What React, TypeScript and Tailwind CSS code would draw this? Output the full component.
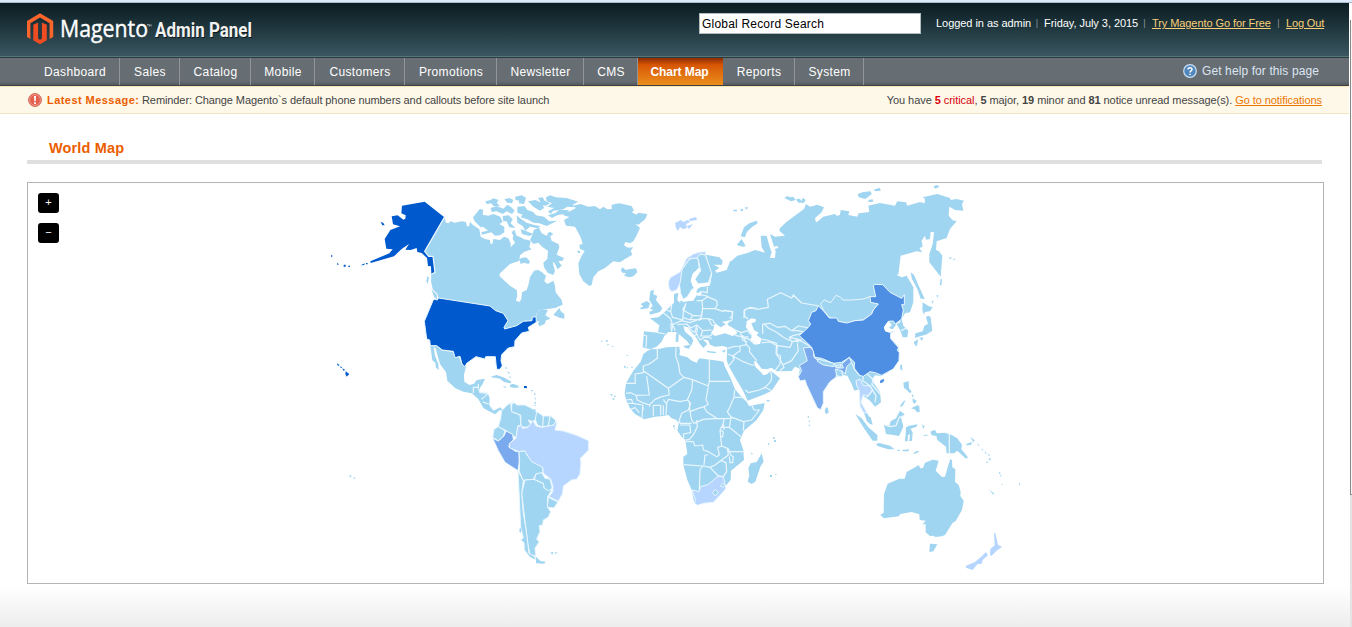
import type { ReactNode } from "react";

const LAND = "#a0d5f1";
const LINE = "#eaf7fe";

/* Map sheets are drawn at three units per pixel, each with its own origin. */
function Sheet({ x, y, children }: { x: number; y: number; children: ReactNode }) {
  return <g transform={`translate(${x} ${y}) scale(0.33333)`}>{children}</g>;
}

function Land({ d, fill = LAND, edge = false }: { d: string; fill?: string; edge?: boolean }) {
  return <path d={d} fill={fill} stroke={edge ? LINE : "none"} strokeWidth={3} strokeLinejoin="round" />;
}

function Border({ d }: { d: string }) {
  return <path d={d} fill="none" stroke={LINE} strokeWidth={3.6} strokeLinejoin="round" />;
}

function NorthAmerica() {
  return (
    <Sheet x={320} y={184}>
      <Land d="M373 100L378 116 385 118 392 112 404 116 425 112 438 114 441 127 447 127 450 113 458 122 478 136 482 158 495 165 510 168 512 181 518 178 520 165 540 168 552 158 565 163 572 178 572 190 585 176 578 165 580 155 575 145 583 137 590 155 602 160 612 166 625 168 632 172 628 190 635 196 612 204 600 214 598 230 570 240 540 268 538 275 555 292 570 305 590 318 592 335 588 350 598 354 604 345 606 325 620 318 626 300 630 280 642 260 655 258 665 264 678 275 673 292 682 300 700 290 705 305 707 325 725 348 728 362 705 372 682 375 660 378 650 388 648 398 637 400 636 410 610 412 590 425 554 435 552 430 564 410 550 388 527 380 510 366 420 352 355 342 352 330 338 315 333 292 334 270 345 266 339 217 326 217 314 202Z" />
      <Land d="M598 225L605 222 618 220 630 232 626 240 612 236 602 240Z" />
      <Land d="M652 385L664 376 684 378 676 394 692 404 678 409 674 420 658 427 654 419 658 410 648 415 648 398ZM700 392L718 372 724 384 733 390 733 404 718 401ZM334 315L350 332 352 348 342 338ZM322 277L327 280 323 301 319 292Z" />
      <Land d="M636 155L642 137 657 131 665 148 680 155 688 148 695 170 715 180 718 190 710 212 732 222 728 230 715 232 725 245 713 256 703 236 698 235 705 262 700 273 683 266 672 250 670 236 682 225 684 200 668 190 655 176 640 180 630 168Z" />
      <Land d="M459 100L480 74 490 78 488 92 505 95 520 90 541 98 548 114 538 120 553 128 553 145 540 154 525 155 514 145 486 152 484 144 504 140 489 128 482 130 464 112ZM496 52L512 48 520 43 536 48 530 56 540 66 520 66 514 58 500 60ZM512 72L530 66 550 74 562 62 574 70 584 80 576 90 560 82 548 90 530 82 515 84ZM553 46L568 42 580 48 576 58 562 56ZM586 38L606 34 618 42 612 60 596 58 598 50 586 48ZM592 68L614 66 622 78 640 84 648 94 672 98 688 112 712 110 680 126 658 118 640 116 622 106 602 100 608 92 592 86ZM624 52L646 48 668 58 672 72 660 80 640 68ZM654 42L668 40 674 50 690 58 676 66 664 58ZM548 96L566 94 578 106 572 118 586 132 568 130 560 112 550 112ZM590 94L602 104 620 116 640 122 662 127 652 133 630 128 616 140 608 126 592 116ZM602 135L620 142 640 150 628 156 606 150ZM690 143L700 150 692 156 680 150Z" />
      <Land d="M678 40L690 34 708 40 740 42 775 53 758 62 762 70 742 68 730 76 714 79 700 80 692 90 684 82 702 72 682 68 696 58 680 52ZM684 94L704 88 718 78 748 78 732 90 712 94 696 102Z" />
      <Land d="M750 82L768 72 758 65 782 60 805 68 825 66 840 76 850 68 862 76 875 75 875 62 898 58 935 66 942 80 935 85 950 92 954 86 982 90 976 105 955 122 946 120 960 132 948 158 940 172 930 178 916 174 912 184 924 191 940 190 932 200 937 212 915 225 900 235 880 232 855 252 835 262 820 280 815 303 808 306 790 292 778 270 775 238 785 215 794 201 780 194 778 182 788 180 782 160 765 128 738 125 732 108 748 99 730 94 733 84Z" />
      <Land d="M902 258L908 250 917 258 930 255 948 253 952 265 940 277 928 280 912 275 918 268 907 266ZM772 200L780 201 780 207 774 207Z" />
      <Land d="M331 486L350 487 367 500 399 503 404 520 417 518 426 542 438 548 432 572 433 593 448 603 462 599 470 588 495 584 488 600 480 611 478 625 503 627 509 643 508 663 520 680 542 670 548 681 540 678 525 691 510 683 490 672 475 645 455 628 430 623 405 612 382 590 378 565 360 540 347 494 341 488 345 515 355 540 356 558 348 551 346 536 337 529Z" />
      <Land d="M512 578L530 573 550 580 574 593 572 598 552 594 540 584 515 580ZM570 603L578 599 592 604 598 610 584 612 570 609ZM548 607L560 608 556 612ZM555 548L562 552 558 556ZM562 560L570 568 566 570ZM568 575L574 580 570 583ZM634 618h5v4h-5zM642 628h4v5h-4zM644 642h4v4h-4zM643 656h4v4h-4z" />
      <Land d="M843 470h5v3h-5zM858 468h5v5h-5zM862 480h4v4h-4zM876 486h4v3h-4zM920 513h4v3h-4zM912 546h5v5h-5zM920 550h4v3h-4zM934 548h4v4h-4z" />
      <Border d="M460 628V610H475V600M475 612L480 626 505 628 484 646M488 654L506 660M512 668L520 676" />
      <Land fill="#005ace" d="M246 65L314 53 373 100 314 202 326 217 339 217 345 266 334 270 333 247 324 246 321 222 305 207 292 204 290 192 272 198 256 197 267 180 244 196 222 217 152 237 151 232 208 208 218 196 207 195 199 194 194 165 211 138 240 127 219 121 215 97 233 94 250 107 256 104 257 94 244 88ZM182 113L190 117 194 124 187 124ZM33 214h4v4h-4zM51 236L57 241 52 243ZM71 242h6v6h-6zM85 245h5v4h-5zM122 244L134 238 133 243ZM138 237h5v4h-5zM50 538L59 543 54 546ZM61 546L67 551 62 552ZM67 553L76 558 70 560ZM77 562L88 570 80 578 76 570ZM612 606L620 606 621 613 612 612Z" />
      <Border d="M373 100L314 202 326 217 339 217 345 266 334 270" />
      <Land fill="#005ace" edge d="M341 345L352 348 355 342 420 352 510 366 527 380 550 388 564 410 552 430 554 435 590 425 610 412 636 410 637 400 648 398 649 415 625 430 628 442 605 447 585 470 584 488 565 492 545 512 543 530 547 545 540 556 530 556 528 540 526 518 497 518 495 525 483 522 468 518 440 538 435 548 426 540 420 517 405 521 400 502 367 498 350 485 331 485 329 468 320 465 313 412Z" />
    </Sheet>
  );
}

function SouthAmerica() {
  return (
    <Sheet x={480} y={380}>
      <Land edge d="M103 62L92 70 95 95 120 105 123 135 113 138 110 175 98 165 75 150 55 140 62 115 65 92 82 75Z" />
      <Land edge d="M95 72L105 68 110 75 135 75 165 90 172 100 165 120 158 125 145 120 153 134 140 142 123 140 122 105 95 95Z" />
      <Land edge d="M170 95L190 108 212 108 228 122 225 135 205 138 185 140 172 135 166 118Z" />
      <Border d="M190 108L188 138M210 108L205 138" />
      <Land edge d="M42 148L55 140 75 152 70 170 55 182 38 172Z" />
      <Land edge fill="#7aa9ed" d="M38 175L55 183 72 168 78 153 98 163 100 178 86 200 108 215 117 212 118 245 114 272 75 247 55 212Z" />
      <Land edge d="M117 215L137 212 140 225 185 255 190 278 168 282 160 298 135 300 130 302 118 275 118 240Z" />
      <Land edge d="M135 300L162 298 192 312 192 325 215 330 203 350 203 382 212 395 205 412 190 420 188 435 178 437 180 455 170 478 178 485 165 505 168 528 150 524 143 490 137 440 130 380 125 340Z" />
      <Land edge d="M168 282L185 278 195 295 210 297 217 325 205 332 193 325 190 310 163 298Z" />
      <Land edge d="M205 352L234 366 222 384 202 382Z" />
      <Land edge d="M114 272L130 303 125 340 130 400 140 460 147 520 165 530 168 540 150 532 133 510 132 488 122 480 130 474 122 440Z" />
      <Land edge fill="#b6d5ff" d="M113 140L123 136 128 145 142 143 160 122 168 138 185 142 205 138 222 135 228 120 230 132 225 150 250 153 290 166 326 182 326 210 301 235 303 250 300 282 290 298 275 300 250 318 248 340 235 364 207 350 218 335 219 320 212 297 190 280 188 262 155 245 137 218 134 212 117 215 88 203 88 190 108 175Z" />
      <Land d="M168 530L180 542 197 546 192 551 168 550ZM211 518L220 515 217 524ZM223 518L233 516 226 523ZM119 445L124 445 123 458 118 455ZM163 75h4v3h-4zM164 65h4v3h-4zM162 88h5v4h-5z" />
    </Sheet>
  );
}

function Asia() {
  return (
    <Sheet x={730} y={184}>
      <Land d="M-1 233L5 230 22 215 50 208 75 198 90 202 105 206 95 190 92 155 110 155 118 185 125 205 120 222 135 222 137 200 134 195 145 192 143 186 132 188 120 150 135 158 165 155 148 140 150 132 170 113 222 75 228 60 240 68 262 62 282 70 275 85 255 103 258 115 264 112 280 98 315 90 322 96 330 92 332 78 358 82 355 93 382 98 386 88 418 84 415 65 450 57 495 65 502 52 528 55 532 65 570 54 584 58 585 45 578 40 622 30 660 42 662 48 680 45 702 50 696 60 700 80 675 78 658 68 656 95 668 109 680 112 660 135 650 162 620 172 618 198 627 202 637 215 632 278 598 235 598 210 608 180 612 145 602 143 600 165 588 167 585 155 575 170 578 188 568 192 577 205 560 202 512 215 505 272 498 272 515 280 530 275 550 310 550 355 540 385 525 388 515 405 520 425 535 440 532 460 518 460 513 445 500 420 482 445 482 462 505 490 508 520 490 555 455 576 435 574 425 588 450 625 453 655 435 668 420 650 400 635 390 655 412 688 425 715 412 713 402 688 390 665 387 618 380 618 373 620 365 600 352 575 340 573 318 578 300 593 280 623 280 658 272 676 262 672 230 603 225 588 210 591 205 578 210 555 160 530 145 500 85 500 40 475 -1 470Z" />
      <Border d="M-20 378L8 384 5 400 -2 402M55 405L45 398 43 378 62 370 82 376 115 370 112 346 152 326 185 342 190 333 215 357 268 366M98 450L98 420 120 418 142 430 165 427 185 440 205 426 238 432M95 478L98 476 120 474 142 485M185 440L205 440 225 445 202 452 188 455 178 460 215 468M102 420L115 432 140 445 160 460 180 470M142 485L140 510 152 516 150 540 135 560M142 485L180 490 188 472 212 470 245 490M202 478L205 500 185 530 160 542M178 460L186 475M195 462L205 475" />
      <Land edge d="M272 360L282 348 302 356 318 334 332 340 338 348 365 348 400 345 422 337 425 350 445 360 430 378 425 390 400 408 375 410 350 418 325 412 298 400 280 378Z" />
      <Land edge fill="#4f8fe3" d="M265 366L280 380 298 402 320 402 325 412 350 417 375 410 400 408 425 390 430 378 445 360 422 355 420 338 437 338 430 305 435 301 458 302 480 325 515 343 523 332 523 362 515 362 520 378 515 405 496 420 490 411 475 412 463 430 468 442 495 440 482 448 482 464 505 490 502 500 508 505 507 530 490 555 455 574 435 566 420 563 400 577 388 574 372 555 374 535 358 520 335 535 310 538 275 523 255 520 245 490 230 475 208 455 235 430 242 420 235 410 245 385 258 380Z" />
      <Land fill="#ffffff" d="M462 430L475 412 486 422 477 432 495 438 480 447 465 441Z" />
      <Land fill="#4f8fe3" d="M450 590L460 584 463 590 456 597 450 596Z" />
      <Land edge fill="#7aa9ed" d="M220 492L240 490 250 500 252 520 265 530 315 542 320 552 340 552 335 540 358 520 364 535 350 548 346 570 335 560 320 568 318 580 300 593 280 623 280 658 272 677 262 672 230 603 225 588 210 591 205 578 215 560 208 545 232 530Z" />
      <Land edge d="M263 525L312 538 312 548 280 543 262 532Z" />
      <Land edge d="M315 545L332 542 330 550 316 549ZM316 555L334 560 339 576 330 578 320 574Z" />
      <Land edge fill="#b6d5ff" d="M378 590L390 585 400 605 418 605 428 618 415 636 400 632 393 655 412 688 400 685 390 665 388 620 380 605Z" />
      <Border d="M400 577L398 590 420 605 438 635 435 655M412 570L432 590 425 600 450 630M428 618L410 640M364 535L374 555 388 574M498 420L512 412M513 440L530 432" />
      <Land d="M32 157L42 130 58 118 80 110 83 118 65 130 50 145 45 160ZM22 180L35 165 47 186 38 188 22 184ZM10 77h11v5h-11zM32 75h7v6h-7zM46 70L53 69 52 76 47 76ZM163 42L172 36 180 40 190 38 197 48 183 52ZM198 46L210 44 214 52 218 41 227 48 222 56 205 56ZM383 30L400 24 422 22 425 30 415 38 405 45 386 40ZM430 17L450 11 452 20 437 22ZM415 48L428 46 430 53 416 54ZM610 7L622 3 628 8 616 14Z" />
      <Land d="M542 265L552 272 566 305 575 325 584 345 572 344 562 315 546 285ZM578 355L595 366 608 370 600 382 585 384 582 392 577 378ZM588 398L596 395 602 400 607 440 588 452 575 455 555 462 556 448 578 442 583 425 594 420ZM552 473L565 466 560 488 553 480ZM568 462L580 460 576 470ZM632 284L636 285 634 305 629 302ZM620 333L626 334 621 342ZM605 352L612 350 606 360ZM658 220h6v4h-6zM670 224h6v3h-6zM510 545L516 540 517 560 511 556Z" />
    </Sheet>
  );
}

function Europe() {
  return (
    <Sheet x={600} y={240}>
      <Land d="M318 44L358 52 368 62 366 74 342 74 358 84 345 92 350 98 380 90 388 70 393 64V325L382 345 382 322 368 318 345 320 330 314 324 300 308 298 322 312 310 324 300 312 288 292 262 262 250 258 255 275 275 292 280 302 273 318 260 302 240 285 226 276 205 276 193 288 185 305 170 320 150 328 128 322 132 274 174 278 178 256 150 235 175 232 190 220 215 195 222 188 222 162 235 158 232 180 240 188 262 184 280 182 290 165 302 166 306 155 290 152 296 142 330 136 335 100Z" />
      <Land edge d="M278 52L294 56 298 85 280 100 275 120 280 142 262 170 250 178 242 160 238 130 245 90 265 62Z" />
      <Land edge d="M290 45L315 42 335 100 325 128 295 132 285 118 302 92 295 60Z" />
      <Land fill="#ffffff" d="M296 84L303 90 290 105 285 118 292 132 326 129 328 137 300 142 288 150 290 160 278 178 262 184 250 180 264 172 274 150 280 142 272 122 278 102Z" />
      <Land d="M276 140L282 142 278 150ZM290 152L300 150 298 158 290 158Z" />
      <Land edge fill="#b6d5ff" d="M205 125L212 112 240 96 260 55 280 42 300 36 318 35 316 45 300 42 290 55 270 55 247 85 240 130 230 150 215 155 207 145Z" />
      <Land d="M152 152L162 150 160 163 172 168 168 180 187 205 180 216 150 224 148 216 160 210 150 206 158 197 148 180 150 160ZM140 183L150 190 145 205 122 208 120 204 130 200 122 192ZM228 282L236 278 235 305 227 306ZM250 318L272 314 268 326 256 324ZM320 332L350 336 345 340 322 337ZM365 332L378 330 372 338ZM240 183L248 182 248 190 242 190Z" />
    </Sheet>
  );
}

function EurasianBorders() {
  return (
    <>
      <Sheet x={600} y={240}>
        <Land fill="#ffffff" d="M345 250L362 262 378 252 365 246 390 241 382 254 405 268 412 280 398 288 375 280 345 288 333 280 340 268ZM440 244L455 235 468 238 466 246 454 250 462 270 476 278 470 286 485 296 480 312 464 314 450 302 456 286 438 262Z" />
        <Border d="M130 285L140 288 138 322M174 278L196 282M190 218L212 236 218 256 215 275M215 195L212 215 218 232 248 240 250 218 258 190M200 210L214 216M258 190L248 210 278 226 305 228 308 205 306 182 290 182M278 226L270 240 248 232M305 206L345 206 368 214 375 212 398 215 396 240 388 245M308 205L302 236 325 236 338 240 345 252M306 182L322 170 350 182 352 195 345 206M290 166L310 165 325 170M322 140L322 158 305 154M328 136L335 100M215 255L245 242 270 248 302 236M232 254L260 252 272 264 290 255 285 278 262 262M290 254L308 272 335 270M308 272L302 288 330 288 340 280M292 262L290 282 300 300M215 275L212 250M226 272L220 258M272 238L300 240 310 235M325 236L335 255 345 258M400 268L425 278 442 272 455 286M405 286L425 290 428 300 442 306M420 280L430 292 445 290M325 290L335 296M290 282L280 290M300 300L312 292 325 292M432 235V212L442 205 470 204" />
      </Sheet>
      <Sheet x={600} y={340}>
        <Border d="M382 26L400 20 420 18 440 14 450 26 448 35 470 62M428 -14L440 14M420 18V32L398 48 383 42M398 48L402 58 388 76 382 74M398 48L430 65 455 75 465 75M436 150L445 158 478 150 495 142 515 152M495 142L512 125 515 112 512 92M430 -8L448 -2 470 10M530 10L528 40 540 58 552 82 540 92M484 -2L500 0 530 10" />
      </Sheet>
    </>
  );
}

function AfricaAndArabia() {
  return (
    <Sheet x={600} y={340}>
      <Land d="M143 32L155 27 172 28 200 22 238 20 240 35 238 45 262 52 275 62 290 68 298 55 320 58 355 62 370 65 375 80 392 115 405 148 428 175 440 185 447 198 494 189 490 210 470 240 432 272 420 300 430 330 432 360 393 392 392 420 375 440 370 455 340 487 310 490 290 495 282 485 275 450 262 420 250 375 250 350 262 342 256 300 245 290 232 272 237 245 230 240 215 235 205 225 190 228 165 230 132 238 105 222 90 205 78 180 74 160 78 130 100 92 122 65 130 42Z" />
      <Land edge fill="#b6d5ff" d="M276 450L297 455 302 440 325 433 355 408 370 410 378 445 370 455 340 487 310 490 293 496 284 490 286 478Z" />
      <Land edge d="M337 458L346 449 355 457 346 468ZM361 437L368 430 375 436 370 442Z" />
      <Border d="M172 28V55L148 72 130 78V98L105 102 106 130H76M130 92L205 145 208 165M140 108L148 165 108 166 92 158 78 160M205 145L252 112 240 100 235 70 227 48 228 22M252 112L275 118 325 138 328 124V58M328 124H390M278 118L275 150 262 180 240 185 205 178 200 190 198 225M208 165L185 170 165 178 148 195 150 200M108 166L112 180 128 188 148 195M78 180L95 178 98 190 128 195 130 210M98 190L82 190M92 208L105 203 118 218M128 200L126 236M160 196H182V226M160 196V228M190 196V226M190 178L198 190M262 180L272 190 265 210 245 220 238 240 240 250 275 250M268 182L270 215 275 240 282 250M270 215L295 205 312 200 325 193 318 180 325 138M312 200L320 215 350 235M350 235L372 236 395 235 382 215 390 200 402 172 404 150M402 172L430 172 442 185M455 195L462 210 478 210 455 240 430 245 390 230M282 250L310 238 350 235M290 240L292 260 280 285 268 298 256 300M240 255L270 255 272 278 250 282 252 294M372 236L370 250 360 270 362 290 365 318 353 322 358 345 350 350 325 335 310 330 308 315 285 318 280 305 258 304M392 238L388 262H362M388 262L423 290M432 244L430 272M365 318L382 325 385 345 362 362 345 375 330 382 308 378 250 374M312 375L315 345 325 345M308 378L300 390 298 450M330 382L355 408 370 410 380 395 378 368 362 362M385 335L430 335M385 325L392 345 400 350 398 368 390 368 388 350M360 270L370 275 368 290 360 292M370 250L372 270" />
      <Land d="M382 22L390 0 435 -30 470 -20 610 -20 600 60 575 93 530 94 514 83 500 88 485 86 468 64 462 64 466 80 482 96 490 106 502 102 512 92 540 115 515 152 500 160 480 168 443 182 428 150 405 112 385 76 380 60Z" />
      <Land d="M485 340L491 365 482 378 466 425 455 432 443 425 448 405 445 385 452 370 470 366ZM452 337L460 342 454 343ZM510 405h6v6h-6zM525 401L531 402 527 406ZM519 292h5v5h-5zM522 300h6v6h-6zM504 310h4v4h-4zM32 162h5v5h-5zM42 167h5v4h-5zM38 174h5v5h-5zM230 240L236 240 232 247ZM219 256h5v5h-5zM222 263h3v3h-3zM498 181L511 180 504 186Z" />
    </Sheet>
  );
}

function Oceania() {
  return (
    <Sheet x={840} y={380}>
      <Land d="M278 239L296 242 287 272 306 291 315 290 323 262 331 238 336 240 337 262 346 268 345 305 356 315 362 335 361 348 371 362 366 390 347 423 338 428 315 465 306 469 285 471 282 467 270 468 257 457 257 432 247 434 257 422 239 420 238 403 215 396 181 402 176 409 132 415 121 405 131 398 132 342 143 311 178 296 194 296 200 276 237 255 240 265 249 264 255 248ZM270 491L292 493 280 514 268 516Z" />
      <Land fill="#b6d5ff" d="M462 459L466 460 474 494 486 500 470 512 454 528 450 525 451 507 464 496ZM438 516L444 526 428 540 425 551 412 553 398 570 378 563 378 557 405 546 425 529Z" />
      <Land d="M46 102L65 115 85 142 112 165 112 182 98 182 72 145ZM132 135L148 138 152 124 168 115 180 92 194 103 183 112 190 140 180 162 177 168 160 165 138 162ZM108 192L118 189 150 197 164 208 145 208 112 198ZM190 8L206 3 207 25 215 35 210 40 198 28 192 24ZM197 60L188 78 179 80 188 66ZM215 42L222 48 217 52ZM218 55L230 62 224 72 218 66ZM213 85L232 76 238 78 239 96 231 97 224 88ZM198 142L208 137 232 133 230 140 212 146 218 158 216 182 208 184 210 162 204 166 203 184 195 184 197 160ZM246 134L254 138 250 147ZM248 165L265 164 258 169ZM271 155L285 149 290 160 315 158 335 165 352 175 366 194 364 208 384 232 378 236 352 212 342 220 320 220 318 200 292 180 289 168 275 166ZM378 192L398 185 392 195 380 196ZM391 170L404 181 400 187ZM412 190L418 196 415 198ZM424 205L430 210 427 212ZM434 213L440 220 436 222ZM444 220L450 226 446 228ZM447 235h5v6h-5zM438 245h5v4h-5zM446 326L463 341 460 344ZM477 277h4v5h-4zM480 286h5v3h-5zM537 310h3v6h-3zM485 312h3v3h-3zM172 209h7v4h-7zM187 210L208 208 205 214 188 214ZM219 220L230 213 240 214 225 221ZM76 104L92 112 98 134 90 132 80 122ZM-42 82L-36 84 -34 98 -42 102 -46 94ZM-97 109h4v4h-4zM-94 122h4v4h-4zM-94 134h4v4h-4z" />
      <Border d="M328 162V220M135 135L150 140 168 137 178 112 188 108" />
    </Sheet>
  );
}

function WorldMap() {
  return (
    <svg className="block h-full w-full" viewBox="28 183 1295 400" aria-hidden="true">
      <AfricaAndArabia />
      <Europe />
      <Asia />
      <EurasianBorders />
      <NorthAmerica />
      <SouthAmerica />
      <Oceania />
      <path fill="#b6d5ff" d="M675 223l6-3 2 2 5-2 2 2-4 2 1 4-4 1-3-2-2 4-2-3zM689 219l7-2 1 3-7 1zM687 226l6-2-4 5z" />
      <path fill={LAND} d="M349 475l3 1-2 1.500zM353 477l2.500 1-1 1.500z" />
    </svg>
  );
}

function Logo() {
  return (
    <svg className="block h-[54px] w-[240px]" viewBox="20 3 240 54">
      <path fill="#f9652b" d="M40 13.300L53.200 21V37L49.600 39V23.200L40 17.600 30.400 23.200V39L27 37V21Z" />
      <path fill="#f04c22" d="M33.300 24.800L38.200 22.600V38.600L40 39.700 41.800 38.600V22.600L46.800 24.800V40.300L40 44.200 33.300 40.300Z" />
      <path fill="#25393f" d="M38.300 22H41.700V38.500L40 39.500 38.300 38.500Z" />
      <text x="60" y="37" fill="#fff" stroke="#fff" strokeWidth=".4" fontFamily="'Open Sans', sans-serif" fontSize="23.500" textLength="88" lengthAdjust="spacingAndGlyphs">Magento</text>
      <path d="M147 24.500h2M148 24.500v2M149.500 26.500v-2l.8 1 .8-1v2" stroke="#dfe5e6" strokeWidth=".5" fill="none" />
      <text x="155" y="37" fill="#f2f2f0" className="[text-shadow:1px_1px_0_#0a1a20]" fontFamily="'Liberation Sans Narrow', 'Roboto', sans-serif" fontSize="20" fontWeight="700" textLength="97" lengthAdjust="spacingAndGlyphs">Admin Panel</text>
    </svg>
  );
}

const tabs = [
  { name: "Dashboard", box: "w-[90px]" },
  { name: "Sales", box: "w-[60px]" },
  { name: "Catalog", box: "w-[71px]" },
  { name: "Mobile", box: "w-[64px]" },
  { name: "Customers", box: "w-[90px]" },
  { name: "Promotions", box: "w-[92px]" },
  { name: "Newsletter", box: "w-[87px]" },
  { name: "CMS", box: "w-[54px]" },
  { name: "Chart Map", box: "w-[85px]" },
  { name: "Reports", box: "w-[72px]" },
  { name: "System", box: "w-[69px]" },
];

export default function App() {
  return (
    <div className="flex h-[627px] w-[1352px] overflow-hidden bg-white font-['Liberation_Sans',Arial,sans-serif] text-[11px] text-[#444]">
      <div className="flex w-[1350px] flex-col bg-linear-to-b from-white from-[93.5%] to-[#ededed]">
        <div className="h-[3px] shrink-0 border-b border-[#a9bdd2] bg-[#dceafb]" />
        <header className="mr-px flex h-[54px] shrink-0 items-start border-b border-[#577477] bg-linear-to-b from-[#0a1d22] to-[#3a5660] pl-5">
          <Logo />
          <div className="mt-[10px] ml-[439px] flex h-[21px] w-[222px] shrink-0 items-center border border-[#b5bcc0] bg-white pl-[2px] text-[12px] tracking-[0.2px] text-black">
            Global Record Search
          </div>
          <div className="mt-[12px] ml-[15px] flex shrink-0 items-center whitespace-nowrap text-white">
            <span className="w-[93px] tracking-[-0.05px]">Logged in as admin</span>
            <span className="w-[15px] pl-px text-center text-[9px] text-[#8b9a9e]">|</span>
            <span className="w-[93px] tracking-[-0.05px]">Friday, July 3, 2015</span>
            <span className="w-[15px] text-center text-[9px] text-[#8b9a9e]">|</span>
            <a className="w-[119px] tracking-[-0.08px] text-[#f9cf79] underline">Try Magento Go for Free</a>
            <span className="w-[15px] text-center text-[9px] text-[#8b9a9e]">|</span>
            <a className="tracking-[-0.15px] text-[#f9cf79] underline">Log Out</a>
          </div>
        </header>
        <nav className="mr-px flex h-[29px] shrink-0 border-t border-b border-t-[#2b3b41] border-b-[#3b4144] bg-linear-to-b from-[#676e73] from-85% to-[#545a5e] pl-[30px] text-[12px] tracking-[0.35px] text-white">
          {tabs.map((tab) =>
            tab.name === "Chart Map" ? (
              <a key={tab.name} className={`${tab.box} flex items-center justify-center bg-linear-to-b from-[#8a2d02] via-[#d65505] via-25% to-[#eb8e1c] pr-[2px] font-bold tracking-[-0.05px]`}>{tab.name}</a>
            ) : (
              <a key={tab.name} className={`${tab.box} flex items-center justify-center border-r border-[#8e9497] pl-px`}>{tab.name}</a>
            ),
          )}
          <a className="mr-[30px] ml-auto flex items-center gap-[5px] pb-px tracking-[0.1px] text-[#dce5f2]">
            <svg className="size-[14px]" viewBox="0 0 14 14">
              <circle cx="7" cy="7" r="6.300" fill="#4f86bb" stroke="#cde1f5" strokeWidth="1.200" />
              <path d="M5 5.500C5 3.200 9 3.200 9 5.400 9 6.800 7 6.800 7 8.400M7 9.700V11" fill="none" stroke="#fff" strokeWidth="1.500" />
            </svg>
            Get help for this page
          </a>
        </nav>
        <div className="mr-px flex h-7 shrink-0 items-center border-t border-b border-t-[#fbe6b4] border-b-[#f0e4c3] bg-[#fef8e9] pr-[27px] pl-7 whitespace-nowrap">
          <svg className="mr-[5px] size-[14px]" viewBox="0 0 14 14">
            <circle cx="7" cy="7" r="6.400" fill="#e2604f" stroke="#cf6658" strokeWidth="1" />
            <circle cx="7" cy="7" r="5.400" fill="none" stroke="#f5a599" strokeWidth=".8" />
            <path d="M6 3H8L7.700 8.200H6.300ZM6.100 9.300H7.900V11H6.100Z" fill="#fff" />
          </svg>
          <b className="w-[95px] tracking-[0.45px] text-[#eb5e00]">Latest Message:</b>
          <span className="tracking-[-0.09px]">Reminder: Change Magento`s default phone numbers and callouts before site launch</span>
          <span className="ml-auto tracking-[-0.065px]">
            You have <span className="text-[#d8000c]"><b>5</b> critical</span>, <b>5</b> major, <b>19</b> minor and <b>81</b> notice unread message(s).{" "}
            <a className="text-[#ea7601] underline">Go to notifications</a>
          </span>
        </div>
        <main className="flex flex-col pl-[27px]">
          <h1 className="mt-[22px] flex h-[28px] w-[1295px] items-start border-b-4 border-[#dfdfdf] pt-[3px] pl-[22px] text-[14.5px] leading-[18px] font-bold tracking-[0.15px] text-[#eb5e00]">World Map</h1>
          <section className="relative mt-[18px] h-[402px] w-[1297px] border border-[#b4b4b4] bg-white">
            <WorldMap />
            <div className="absolute top-[10px] left-[10px] flex flex-col gap-[10px] text-[11px] leading-none text-white">
              <button className="flex h-5 w-[21px] items-center justify-center rounded-[3px] bg-black pb-px">+</button>
              <button className="flex h-5 w-[21px] items-center justify-center rounded-[3px] bg-black pb-px">−</button>
            </div>
          </section>
        </main>
      </div>
      <div className="flex w-[2px] flex-col">
        <div className="h-[3px] shrink-0 border-b border-[#a9bdd2] bg-[#dceafb]" />
        <div className="h-[17px] bg-white" />
        <div className="h-[475px] border-b border-l border-[#888] bg-[#f8f8f8]" />
        <div className="flex-1 bg-[#e4e4e4]" />
      </div>
    </div>
  );
}
